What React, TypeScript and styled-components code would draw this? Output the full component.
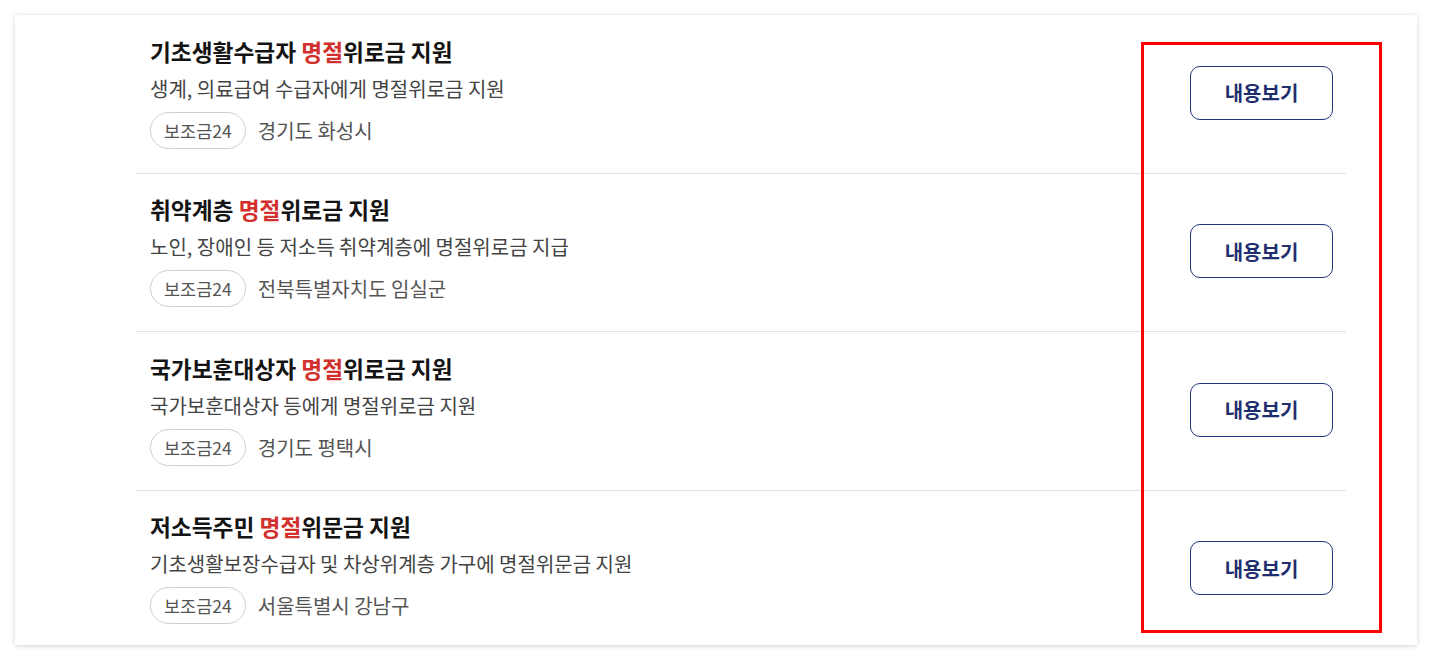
import React from 'react';
import styled, { createGlobalStyle } from 'styled-components';

const GlobalStyle = createGlobalStyle`
  html, body {
    margin: 0;
    padding: 0;
    background: #ffffff;
  }
  body {
    font-family: "Noto Sans CJK KR", "Noto Sans", sans-serif;
  }
`;

const Page = styled.div`
  position: relative;
  padding: 15px;
  width: 1432px;
  box-sizing: border-box;
`;

const Card = styled.section`
  background: #fff;
  box-shadow: 0 1px 5px rgba(0, 0, 0, 0.18);
  padding: 0 71px 0 121px;
`;

const List = styled.ul`
  list-style: none;
  margin: 0;
  padding: 0;
`;

const Item = styled.li`
  display: flex;
  align-items: center;
  justify-content: space-between;
  padding: 21.5px 13px 24px 14px;
  border-bottom: 1px solid #e3e3e3;
  &:last-child {
    border-bottom: none;
    padding-bottom: 21px;
  }
`;

const Info = styled.div`
  display: flex;
  flex-direction: column;
`;

const Title = styled.h3`
  margin: 0;
  font-size: 22.7px;
  line-height: 30px;
  font-weight: 700;
  color: #141414;
`;

const Mark = styled.span`
  color: #d2302c;
`;

const Desc = styled.p`
  margin: 8px 0 0;
  font-size: 20px;
  line-height: 28px;
  color: #444;
`;

const Meta = styled.div`
  display: flex;
  align-items: center;
  gap: 12px;
  margin-top: 9px;
`;

const Tag = styled.span`
  display: inline-flex;
  align-items: center;
  height: 37px;
  box-sizing: border-box;
  padding: 0 13px;
  border: 1px solid #cfcfcf;
  border-radius: 19px;
  font-size: 17.5px;
  color: #555;
`;

const Region = styled.span`
  font-size: 20px;
  color: #555;
`;

const ViewButton = styled.button`
  width: 143px;
  height: 54px;
  border: 1px solid #22357a;
  border-radius: 10px;
  background: #fff;
  color: #1f2f6e;
  font-family: inherit;
  font-size: 20px;
  font-weight: 700;
  cursor: pointer;
`;

const Highlight = styled.div`
  position: absolute;
  left: 1141px;
  top: 42px;
  width: 241px;
  height: 591px;
  box-sizing: border-box;
  border: 3px solid #ff0000;
  pointer-events: none;
`;

type Benefit = {
  pre: string;
  mark: string;
  post: string;
  desc: string;
  region: string;
};

const items: Benefit[] = [
  { pre: '기초생활수급자 ', mark: '명절', post: '위로금 지원', desc: '생계, 의료급여 수급자에게 명절위로금 지원', region: '경기도 화성시' },
  { pre: '취약계층 ', mark: '명절', post: '위로금 지원', desc: '노인, 장애인 등 저소득 취약계층에 명절위로금 지급', region: '전북특별자치도 임실군' },
  { pre: '국가보훈대상자 ', mark: '명절', post: '위로금 지원', desc: '국가보훈대상자 등에게 명절위로금 지원', region: '경기도 평택시' },
  { pre: '저소득주민 ', mark: '명절', post: '위문금 지원', desc: '기초생활보장수급자 및 차상위계층 가구에 명절위문금 지원', region: '서울특별시 강남구' },
];

export default function App() {
  return (
    <>
      <GlobalStyle />
      <Page>
        <Card>
          <List>
            {items.map((it, i) => (
              <Item key={i}>
                <Info>
                  <Title>
                    {it.pre}
                    <Mark>{it.mark}</Mark>
                    {it.post}
                  </Title>
                  <Desc>{it.desc}</Desc>
                  <Meta>
                    <Tag>보조금24</Tag>
                    <Region>{it.region}</Region>
                  </Meta>
                </Info>
                <ViewButton type="button">내용보기</ViewButton>
              </Item>
            ))}
          </List>
        </Card>
        <Highlight />
      </Page>
    </>
  );
}
